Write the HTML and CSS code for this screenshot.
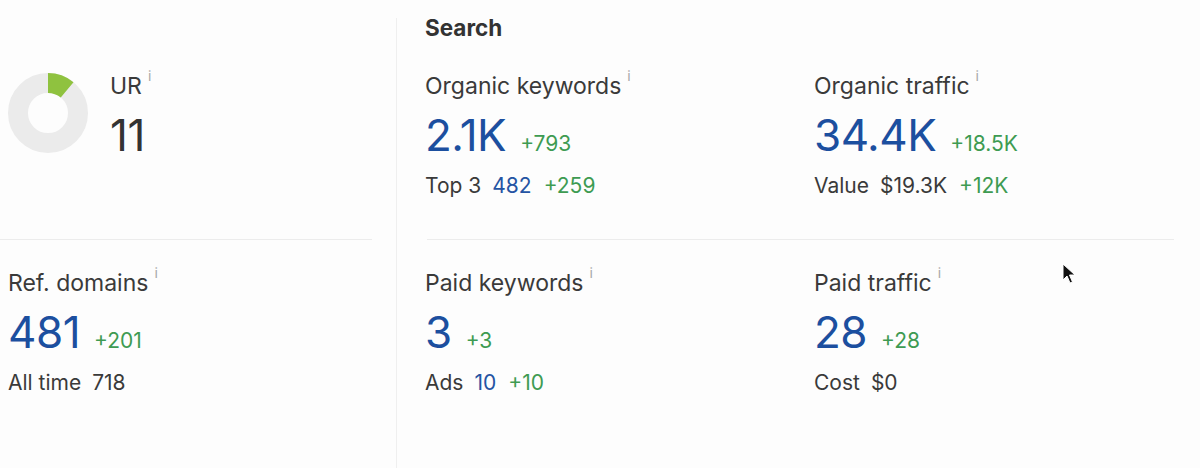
FILE: index.html
```html
<!DOCTYPE html>
<html lang="en">
<head>
<meta charset="utf-8">
<title>Overview</title>
<link rel="stylesheet" href="styles.css">
</head>
<body>
<div class="page">
  <section class="left">
    <div class="ur-block">
      <svg class="donut" width="80" height="80" viewBox="0 0 80 80" aria-hidden="true">
        <circle cx="40" cy="40" r="30" fill="none" stroke="#ebebeb" stroke-width="20"/>
        <circle cx="40" cy="40" r="30" fill="none" stroke="#8fc23f" stroke-width="20"
          stroke-dasharray="20.7 188.5" transform="rotate(-90 40 40)"/>
      </svg>
      <div class="metric">
        <div class="label">UR<span class="info">i</span></div>
        <div class="value-row"><span class="big dark">11</span></div>
      </div>
    </div>
    <hr class="divider left-divider">
    <div class="metric">
      <div class="label">Ref. domains<span class="info">i</span></div>
      <div class="value-row"><span class="big">481</span><span class="delta">+201</span></div>
      <div class="sub">All time<span class="sub-val plain">718</span></div>
    </div>
  </section>
  <div class="vline"></div>
  <section class="right">
    <h2 class="title">Search</h2>
    <div class="grid">
      <div class="metric">
        <div class="label">Organic keywords<span class="info">i</span></div>
        <div class="value-row"><span class="big">2.1K</span><span class="delta">+793</span></div>
        <div class="sub">Top 3<span class="sub-val">482</span><span class="sub-delta">+259</span></div>
      </div>
      <div class="metric">
        <div class="label">Organic traffic<span class="info">i</span></div>
        <div class="value-row"><span class="big">34.4K</span><span class="delta">+18.5K</span></div>
        <div class="sub">Value<span class="sub-val plain">$19.3K</span><span class="sub-delta">+12K</span></div>
      </div>
      <hr class="divider grid-divider">
      <div class="metric">
        <div class="label">Paid keywords<span class="info">i</span></div>
        <div class="value-row"><span class="big">3</span><span class="delta">+3</span></div>
        <div class="sub">Ads<span class="sub-val">10</span><span class="sub-delta">+10</span></div>
      </div>
      <div class="metric">
        <div class="label">Paid traffic<span class="info">i</span></div>
        <div class="value-row"><span class="big">28</span><span class="delta">+28</span></div>
        <div class="sub">Cost<span class="sub-val plain">$0</span></div>
      </div>
    </div>
  </section>
  <svg class="cursor" width="14" height="22" viewBox="0 0 14 22" aria-hidden="true">
    <path d="M1 1 L1 17 L5 13 L8 20 L10.5 19 L7.5 12 L13 12 Z" fill="#111" stroke="#fff" stroke-width="1"/>
  </svg>
</div>
</body>
</html>
```

FILE: styles.css
```css
* { box-sizing: border-box; }

html, body {
  margin: 0;
  padding: 0;
  background: #fdfdfd;
}

body {
  font-family: Inter, "Noto Sans", "Liberation Sans", sans-serif;
  color: #333;
  width: 1200px;
  height: 468px;
  overflow: hidden;
}

.page {
  position: relative;
  display: flex;
  height: 468px;
}

.left {
  width: 372px;
  flex: none;
  padding-top: 72px;
  margin-right: 24px;
}

.ur-block {
  display: flex;
  align-items: flex-start;
  gap: 22px;
  padding-left: 8px;
  height: 128px;
}

.donut {
  margin-top: 1px;
  flex: none;
}

.left > .metric {
  padding-left: 8px;
}

.vline {
  width: 1px;
  flex: none;
  background: #efefef;
  margin-top: 18px;
}

.right {
  flex: none;
  padding-left: 28px;
  padding-top: 14px;
}

.title {
  margin: 0;
  font-size: 22.5px;
  line-height: 28px;
  font-weight: 700;
  color: #333;
}

.grid {
  display: grid;
  grid-template-columns: 389px 389px;
  margin-top: 30px;
}

.divider {
  border: none;
  height: 1px;
  background: #ececec;
  margin: 0;
}

.left-divider {
  width: 372px;
  margin-top: 39px;
  margin-bottom: 29px;
}

.grid-divider {
  grid-column: 1 / -1;
  width: 747px;
  margin-left: 2px;
  margin-top: 39px;
  margin-bottom: 29px;
}

.label {
  font-size: 23px;
  line-height: 28px;
  color: #3a3a3a;
  white-space: nowrap;
}

.info {
  display: inline-block;
  vertical-align: top;
  font-size: 14px;
  line-height: 14px;
  margin-left: 6px;
  margin-top: -3px;
  color: #a8a8a8;
}

.value-row {
  display: flex;
  align-items: baseline;
  gap: 14px;
  height: 70px;
  line-height: 70px;
}

.big {
  font-size: 44px;
  color: #1c4f9f;
  letter-spacing: -0.5px;
}

.big.dark {
  color: #333;
}

.delta {
  font-size: 21px;
  color: #3e9b52;
}

.sub {
  font-size: 21px;
  line-height: 28px;
  margin-top: 2px;
  color: #3a3a3a;
  white-space: nowrap;
}

.sub-val {
  margin-left: 11px;
  color: #2554a3;
}

.sub-val.plain {
  color: #3a3a3a;
}

.sub-delta {
  margin-left: 12px;
  color: #3e9b52;
}

.cursor {
  position: absolute;
  left: 1062px;
  top: 263px;
}
```
